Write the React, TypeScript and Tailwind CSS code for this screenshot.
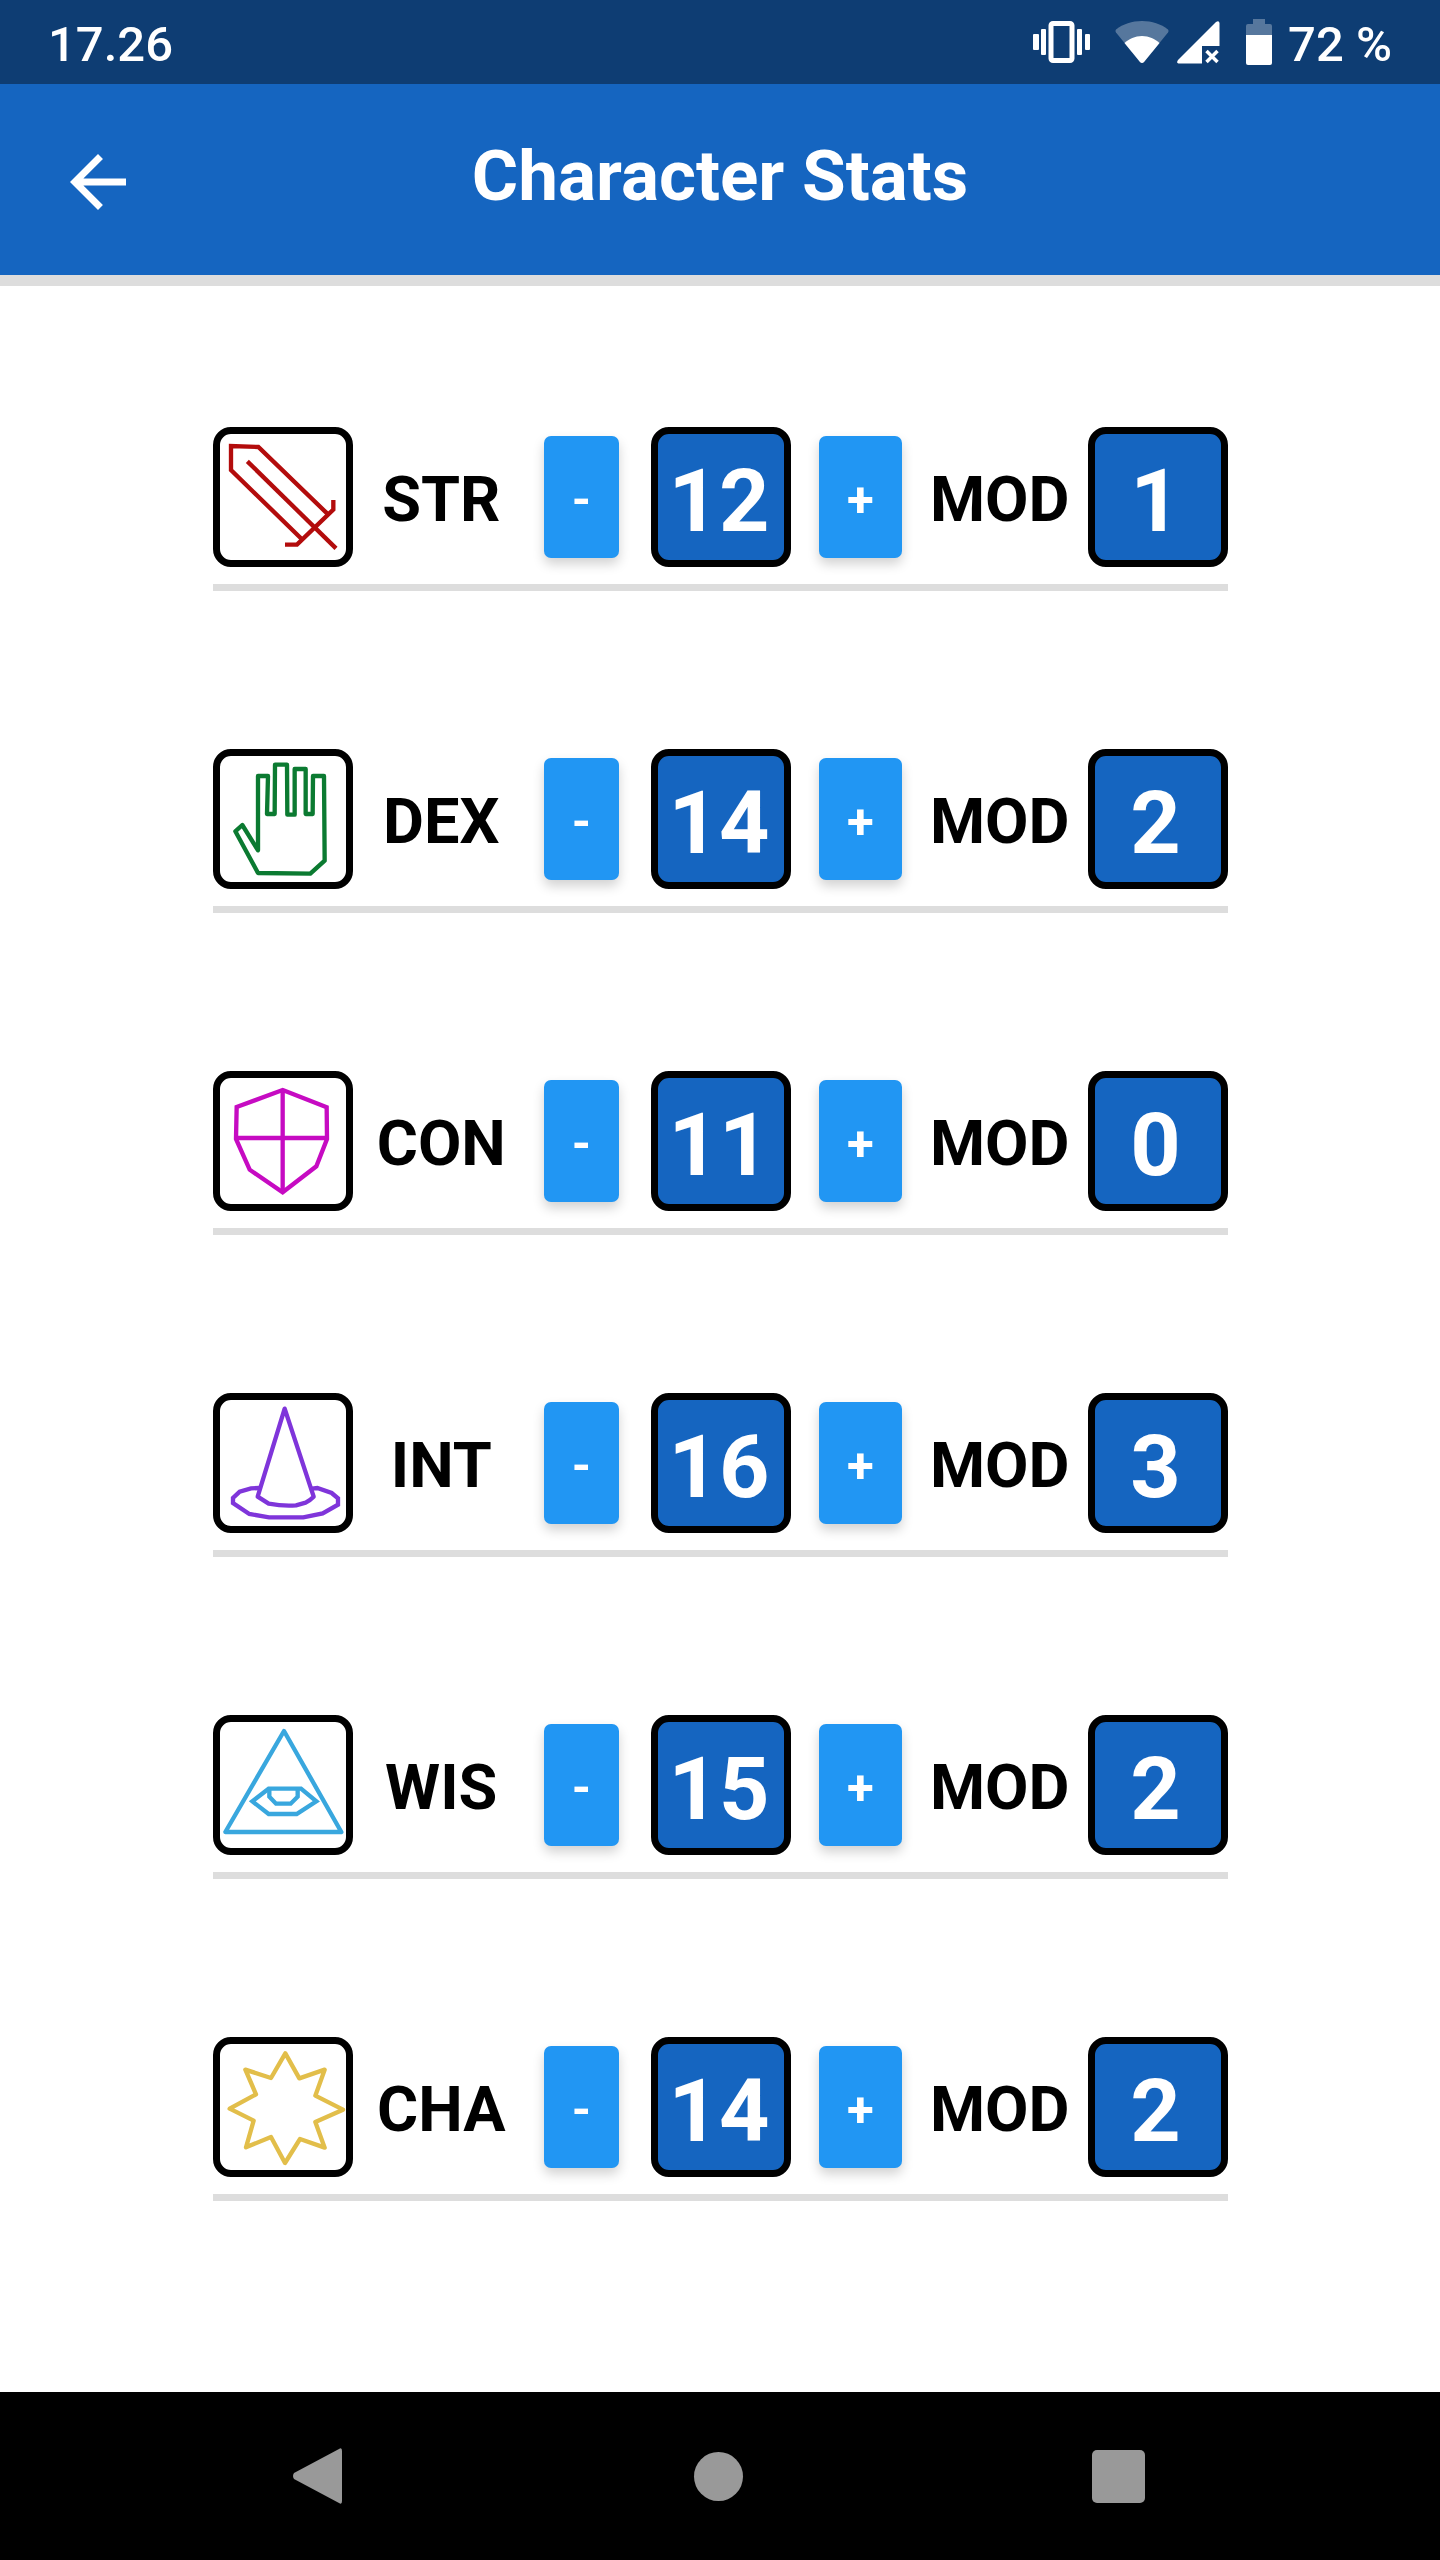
import { useState, type ReactNode } from "react";

type Stat = {
  name: string;
  initial: number;
  color: string;
  viewBox: string;
  icon: ReactNode;
};

const STATS: Stat[] = [
  {
    name: "STR",
    initial: 12,
    color: "#b30c0c",
    viewBox: "60 72 378 378",
    icon: (
      <>
        <path d="M382 311 L175 111 L93 108 L93 180 L305 387" />
        <path d="M142 154 L408 415" />
        <path d="M400 270 V299 L291 404 H255" />
      </>
    ),
  },
  {
    name: "DEX",
    initial: 14,
    color: "#0b7a31",
    viewBox: "60 63 378 378",
    icon: (
      <path
        strokeLinejoin="round"
        d="M174 346 L174 123 L204 123 L201 237 L224 237 L225 89 L261 89 L262 239 L284 239 L284 102 L317 102 L317 237 L338 237 L339 123 L372 123 L374 377 L331 416 L174 414 L106 289 L127 270 Z"
      />
    ),
  },
  {
    name: "CON",
    initial: 11,
    color: "#c60bc2",
    viewBox: "60 69 378 378",
    icon: (
      <>
        <path d="M248 105 L380 157 L381 252 L349 334 L248 412 L149 344 L108 252 L110 156 Z" />
        <path d="M248 105 V412 M108 249 H381" />
      </>
    ),
  },
  {
    name: "INT",
    initial: 16,
    color: "#7f35da",
    viewBox: "60 60 378 378",
    icon: (
      <>
        <path
          strokeLinejoin="round"
          d="M254 86 L341 350 Q330 361 317 368 L288 376 Q250 379 206 371 L173 350 Z"
        />
        <path d="M179 324 L153 325 L119 335 L99 354 V369 L148 402 L207 412 H310 L368 400 L414 374 V355 L395 339 L352 324 L336 326" />
      </>
    ),
  },
  {
    name: "WIS",
    initial: 15,
    color: "#39a7de",
    viewBox: "60 66 378 378",
    icon: (
      <>
        <path strokeLinejoin="round" d="M252 93 L424 396 H76 Z" />
        <path d="M206 266 H303 L349 304 L290 342 H206 L157 304 Z" />
        <path d="M208 268 V290 L228 311 H272 L293 290 V268" />
      </>
    ),
  },
  {
    name: "CHA",
    initial: 14,
    color: "#e2be4a",
    viewBox: "60 72 378 378",
    icon: (
      <path
        strokeLinejoin="round"
        d="M256 100 L298 175 L374 149 L346 227 L429 269 L346 306 L374 383 L300 357 L255 429 L213 351 L138 382 L161 302 L89 266 L168 223 L136 149 L213 174 Z"
      />
    ),
  },
];

function StatusBar() {
  return (
    <div className="flex h-[84px] items-center justify-between bg-[#0e3d73] px-12 text-[49px] font-medium leading-none text-white">
      <span className="pt-1">17.26</span>
      <div className="flex items-center">
        <svg className="mr-6 h-[42px] w-[58px]" viewBox="0 0 58 42" fill="#fff" aria-hidden="true">
          <rect x="0" y="13" width="6" height="16" rx="1" />
          <rect x="8" y="8" width="5" height="26" rx="1" />
          <rect x="18" y="2.500" width="21" height="37" rx="2" fill="none" stroke="#fff" strokeWidth="5" />
          <rect x="44" y="8" width="5" height="26" rx="1" />
          <rect x="52" y="13" width="5" height="16" rx="1" />
        </svg>
        <svg className="mr-2 h-[42px] w-[54px]" viewBox="0 0 54 42" aria-hidden="true">
          <path
            fill="#fff"
            fillOpacity=".3"
            d="M27 0 C17 0 8 3 1 8.500 Q0 10 1 11.500 L25 41 Q27 43 29 41 L53 11.500 Q54 10 53 8.500 C46 3 37 0 27 0 Z"
          />
          <path fill="#fff" d="M27 15 C20 15 14 18 9.500 22 L25 41 Q27 43 29 41 L44.500 22 C40 18 34 15 27 15 Z" />
        </svg>
        <svg className="mr-[26px] h-[43px] w-[43px]" viewBox="0 0 43 43" aria-hidden="true">
          <path fill="#fff" d="M39 1 Q42 -1 42.500 2 V25 H25 V42.500 H1.500 Q-1 42 1 39 Z" />
          <path stroke="#fff" strokeWidth="3.500" d="M29.500 30 L40.500 41 M40.500 30 L29.500 41" />
        </svg>
        <svg className="mr-4 h-[46px] w-[26px]" viewBox="0 0 26 46" aria-hidden="true">
          <path fill="#fff" fillOpacity=".3" d="M7 0 H19 V5 H24 Q26 5 26 7 V16 H0 V7 Q0 5 2 5 H7 Z" />
          <path fill="#fff" d="M0 16 H26 V44 Q26 46 24 46 H2 Q0 46 0 44 Z" />
        </svg>
        <span className="pt-1">72 %</span>
      </div>
    </div>
  );
}

function Header() {
  return (
    <header className="grid h-[202px] grid-cols-[1fr_auto_1fr] items-center border-b-[11px] border-[#ddd] bg-[#1565c0] px-14 text-white">
      <button type="button" aria-label="Back" className="mt-1 flex size-[84px] items-center justify-center">
        <svg className="size-14" viewBox="4 4 16 16" fill="currentColor" aria-hidden="true">
          <path d="M20 11H7.830l5.590-5.590L12 4l-8 8 8 8 1.410-1.410L7.830 13H20v-2z" />
        </svg>
      </button>
      <h1 className="pb-2 text-[71px] font-bold leading-none">Character Stats</h1>
    </header>
  );
}

const STEP_BUTTON =
  "h-[122px] rounded-[7px] bg-[#2196f3] pt-1 text-[49px] font-bold leading-none text-white shadow-[0_6px_12px_rgba(0,0,0,0.18)]";
const VALUE_BOX =
  "flex size-[140px] shrink-0 items-center justify-center rounded-[18px] border-[7px] border-black bg-[#1565c0] pr-1 pt-2 text-[88px] font-bold leading-none text-white";

function StatRow({ stat }: { stat: Stat }) {
  const [value, setValue] = useState(stat.initial);
  const modifier = Math.floor((value - 10) / 2);

  return (
    <li className="flex items-center border-b-[7px] border-[#ddd] pb-[17px]">
      <div className="size-[140px] shrink-0 rounded-[18px] border-[7px] border-black">
        <svg
          className="size-full"
          viewBox={stat.viewBox}
          fill="none"
          stroke={stat.color}
          strokeWidth="13"
          aria-hidden="true"
        >
          {stat.icon}
        </svg>
      </div>
      <span className="mr-[14px] flex-1 pt-1 text-center text-[63px] font-bold leading-none">{stat.name}</span>
      <button
        type="button"
        aria-label={`Decrease ${stat.name}`}
        className={`${STEP_BUTTON} w-[75px]`}
        onClick={() => setValue(value - 1)}
      >
        -
      </button>
      <output aria-label={stat.name} className={`${VALUE_BOX} ml-8 mr-7`}>
        {value}
      </output>
      <button
        type="button"
        aria-label={`Increase ${stat.name}`}
        className={`${STEP_BUTTON} w-[83px]`}
        onClick={() => setValue(value + 1)}
      >
        +
      </button>
      <span className="ml-7 mr-[18px] pt-1 text-[63px] font-bold leading-none">MOD</span>
      <output aria-label={`${stat.name} modifier`} className={VALUE_BOX}>
        {modifier}
      </output>
    </li>
  );
}

function NavigationBar() {
  return (
    <nav className="grid h-[168px] grid-cols-3 items-center justify-items-center bg-black pl-[120px] pr-[122px] text-[#999]">
      <button type="button" aria-label="Back">
        <svg className="h-14 w-[54px]" viewBox="0 0 54 56" fill="currentColor" aria-hidden="true">
          <path d="M46 1 Q49 -1 49 3 V53 Q49 57 46 55 L1 31 Q-1 28 1 25 Z" />
        </svg>
      </button>
      <button type="button" aria-label="Home" className="size-[49px] rounded-full bg-current" />
      <button type="button" aria-label="Recent apps" className="size-[53px] rounded-[5px] bg-current" />
    </nav>
  );
}

export default function App() {
  return (
    <div className="flex min-h-screen flex-col bg-white font-[Roboto,sans-serif] text-black">
      <StatusBar />
      <Header />
      <main className="flex-1 px-8 pt-[141px]">
        <ul className="mx-auto flex max-w-[1015px] flex-col gap-[158px]">
          {STATS.map((stat) => (
            <StatRow key={stat.name} stat={stat} />
          ))}
        </ul>
      </main>
      <NavigationBar />
    </div>
  );
}
